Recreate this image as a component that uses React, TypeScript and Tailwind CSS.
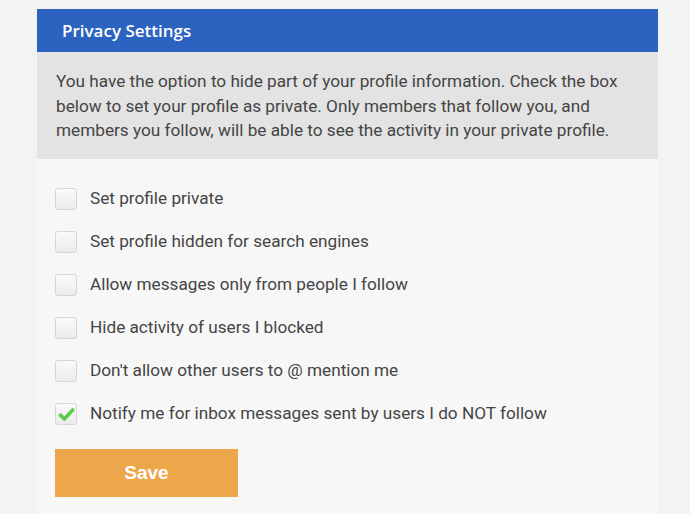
import { useState } from "react";

const options = [
  { label: "Set profile private", checked: false },
  { label: "Set profile hidden for search engines", checked: false },
  { label: "Allow messages only from people I follow", checked: false },
  { label: "Hide activity of users I blocked", checked: false },
  { label: "Don't allow other users to @ mention me", checked: false },
  { label: "Notify me for inbox messages sent by users I do NOT follow", checked: true },
];

function Checkbox({ checked, onClick }: { checked: boolean; onClick: () => void }) {
  return (
    <button
      type="button"
      onClick={onClick}
      className="flex h-[22px] w-[22px] shrink-0 items-center justify-center rounded-[3px] border border-[#d6d6d6] bg-gradient-to-b from-[#fafafa] to-[#ebebeb]"
    >
      {checked && (
        <svg viewBox="0 0 16 16" className="h-[17px] w-[17px]">
          <path d="M2.3 8.6 L6 12.2 L13.8 3.8" fill="none" stroke="#5ccb48" strokeWidth="3.4" strokeLinecap="round" strokeLinejoin="round" />
        </svg>
      )}
    </button>
  );
}

export default function App() {
  const [values, setValues] = useState(options.map((o) => o.checked));

  return (
    <div className="min-h-[514px] bg-[#f3f3f3] px-[37px] pt-[9px] font-['Roboto',sans-serif] text-[#454545]">
      <div className="w-[621px] bg-[#f7f7f7]">
        <div className="flex h-[43px] items-center bg-[#2d63c0] px-[25px] font-['Open_Sans',sans-serif] text-[17px] font-semibold text-white">
          Privacy Settings
        </div>
        <div className="h-[107px] bg-[#e3e3e3] px-[19px] pt-[17px] text-[17.2px] leading-[24.5px]">
          You have the option to hide part of your profile information. Check the box below to set your profile as private. Only members that follow you, and members you follow, will be able to see the activity in your private profile.
        </div>
        <div className="px-[18px] pt-[29px] pb-[20px]">
          <div className="flex flex-col gap-[21px]">
            {options.map((o, i) => (
              <label key={o.label} className="flex h-[22px] items-center gap-[13px] text-[17.2px]">
                <Checkbox
                  checked={values[i]}
                  onClick={() => setValues((v) => v.map((x, j) => (j === i ? !x : x)))}
                />
                <span>{o.label}</span>
              </label>
            ))}
          </div>
          <button
            type="button"
            className="mt-[24px] h-[48px] w-[183px] bg-[#eea64a] font-['Liberation_Sans',sans-serif] text-[19px] font-bold text-white"
          >
            Save
          </button>
        </div>
      </div>
    </div>
  );
}
